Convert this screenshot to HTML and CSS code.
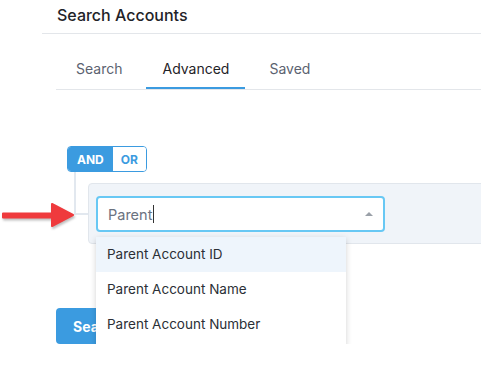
FILE: index.html
```html
<!DOCTYPE html>
<html lang="en">
<head>
    <meta charset="UTF-8">
    <title>Search Accounts</title>
    <link rel="stylesheet" href="styles.css">
</head>
<body>
    <div class="panel">
        <div class="panel-header">
            <h2>Search Accounts</h2>
        </div>

        <div class="panel-body">
            <nav class="tabs">
                <a class="tab">Search</a>
                <a class="tab active">Advanced</a>
                <a class="tab">Saved</a>
            </nav>

            <div class="builder">
                <div class="toggle">
                    <span class="toggle-btn on">AND</span>
                    <span class="toggle-btn">OR</span>
                </div>

                <div class="rules">
                    <div class="rule">
                        <svg class="pointer" width="76" height="28" viewBox="0 0 76 28">
                            <path d="M3 12.5 H52 V3 L73 14 L52 25 V16.5 H3 Z" fill="#ef3a3d" stroke="#ef3a3d" stroke-width="2" stroke-linejoin="round"/>
                        </svg>
                        <div class="select">
                            <span class="select-value">Parent<i class="cursor"></i></span>
                            <span class="caret"></span>
                            <ul class="options">
                                <li class="hover">Parent Account ID</li>
                                <li>Parent Account Name</li>
                                <li>Parent Account Number</li>
                            </ul>
                        </div>
                    </div>
                </div>
            </div>

            <button class="search-btn">Search</button>
        </div>
    </div>
</body>
</html>
```

FILE: styles.css
```css
* {
    margin: 0;
    padding: 0;
    box-sizing: border-box;
}

body {
    font-family: 'Inter', 'Liberation Sans', sans-serif;
    background: #fff;
    color: #2b2f36;
    overflow: hidden;
}

.panel {
    margin-left: 42px;
}

.panel-header {
    height: 34px;
    padding: 5px 15px 0;
    border-bottom: 1px solid #e3e6ea;
}

.panel-header h2 {
    font-size: 16px;
    font-weight: 500;
    line-height: 21px;
    color: #1f2328;
}

.panel-body {
    padding-left: 14px;
}

.tabs {
    display: flex;
    gap: 8px;
    margin-top: 16px;
    padding-left: 4px;
    border-bottom: 1px solid #e3e6ea;
}

.tab {
    padding: 10px 16px 10px;
    line-height: 17px;
    font-size: 14px;
    color: #5b6270;
    border-bottom: 2px solid transparent;
}

.tab.active {
    color: #1f2328;
    border-bottom-color: #3b9be0;
}

.builder {
    margin-top: 56px;
    padding-left: 11px;
}

.toggle {
    display: inline-flex;
    height: 26px;
    border: 1px solid #3b9be0;
    border-radius: 4px;
    overflow: hidden;
}

.toggle-btn {
    display: flex;
    align-items: center;
    padding: 0 8px;
    font-size: 12px;
    font-weight: 700;
    color: #3b9be0;
    background: #fff;
}

.toggle-btn.on {
    padding: 0 9px;
    background: #3b9be0;
    color: #fff;
}

.rules {
    position: relative;
    margin-left: 7px;
    padding: 11px 0 0 14px;
}

.rules::before {
    content: '';
    position: absolute;
    left: 0;
    top: 0;
    width: 2px;
    height: 43px;
    background: #e2e8ef;
}

.rules::after {
    content: '';
    position: absolute;
    left: 0;
    top: 41px;
    width: 14px;
    height: 2px;
    background: #e2e8ef;
}

.rule {
    position: relative;
    height: 61px;
    margin-right: -10px;
    padding: 12px 7px 0;
    background: #f0f4f9;
    border: 1px solid #e1e6ec;
    border-radius: 4px;
}

.pointer {
    position: absolute;
    left: -89px;
    top: 17px;
    z-index: 2;
    filter: drop-shadow(1px 2px 1px rgba(0,0,0,0.25));
}

.select {
    position: relative;
    width: 289px;
    height: 36px;
    display: flex;
    align-items: center;
    padding: 0 10px;
    background: #fff;
    border: 2px solid #68c8f4;
    border-radius: 4px;
}

.select-value {
    display: flex;
    align-items: center;
    font-size: 14.5px;
    color: #6b7280;
}

.cursor {
    display: inline-block;
    width: 1px;
    height: 18px;
    margin-left: 1px;
    background: #333;
}

.caret {
    margin-left: auto;
    width: 0;
    height: 0;
    border-left: 4px solid transparent;
    border-right: 4px solid transparent;
    border-bottom: 4px solid #9aa0a8;
}

.options {
    position: absolute;
    left: -2px;
    top: 39px;
    width: 250px;
    list-style: none;
    padding-bottom: 4px;
    background: #fff;
    box-shadow: 0 2px 6px rgba(0,0,0,0.18);
    z-index: 3;
}

.options li {
    height: 35px;
    line-height: 35px;
    padding-left: 11px;
    font-size: 13.5px;
    color: #2b2f36;
}

.options li.hover {
    background: #eef5fc;
}

.search-btn {
    display: block;
    margin-top: 64px;
    height: 36px;
    padding: 0 17px;
    background: #3b9be0;
    color: #fff;
    border: none;
    border-radius: 4px;
    font-family: inherit;
    font-size: 14px;
    font-weight: 700;
}
```
